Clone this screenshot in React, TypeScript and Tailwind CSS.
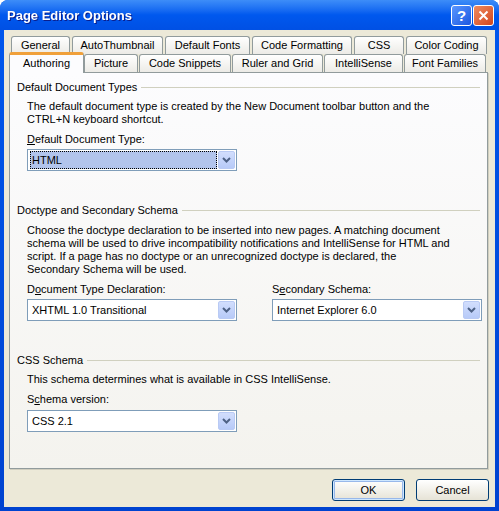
import React from 'react';

const font = { fontFamily: '"Liberation Sans", Arial, sans-serif' };

const backTabs = [
  { label: 'General', w: 'w-[59px]', ml: 'ml-[7px]' },
  { label: 'AutoThumbnail', w: 'w-[91px]', ml: 'ml-[2px]' },
  { label: 'Default Fonts', w: 'w-[85px]', ml: 'ml-[2px]' },
  { label: 'Code Formatting', w: 'w-[100px]', ml: 'ml-[2px]' },
  { label: 'CSS', w: 'w-[50px]', ml: 'ml-[2px]' },
  { label: 'Color Coding', w: 'w-[81px]', ml: 'ml-[2px]' },
];

const frontTabs = [
  { label: 'Picture', w: 'w-[54px]', ml: 'ml-0' },
  { label: 'Code Snippets', w: 'w-[92px]', ml: 'ml-[1px]' },
  { label: 'Ruler and Grid', w: 'w-[91px]', ml: 'ml-[1px]' },
  { label: 'IntelliSense', w: 'w-[79px]', ml: 'ml-[1px]' },
  { label: 'Font Families', w: 'w-[82px]', ml: 'ml-[1px]' },
];

function Tab({ label, w, ml }: { label: string; w: string; ml: string }) {
  return (
    <div
      className={`${w} ${ml} h-[18px] shrink-0 flex items-center justify-center rounded-t-[3px] border border-b-0 border-[#919B9C] bg-gradient-to-b from-[#FFFFFF] to-[#ECEBE6] text-black`}
    >
      {label}
    </div>
  );
}

function Chevron() {
  return (
    <svg width="9" height="6" viewBox="0 0 9 6">
      <polyline points="1,1 4.5,4.5 8,1" fill="none" stroke="#4D6185" strokeWidth="2" />
    </svg>
  );
}

function Select({ value, focused }: { value: string; focused?: boolean }) {
  return (
    <div className="w-[210px] h-[22px] border border-[#7F9DB9] bg-white flex items-center p-[1px]">
      <div className="flex-1 h-full flex items-center pl-[1px]">
        {focused ? (
          <div className="w-[187px] h-[18px] flex items-center pl-[1px] bg-[#B2C4EC] border border-dotted border-black">
            {value}
          </div>
        ) : (
          <div className="pl-[2px]">{value}</div>
        )}
      </div>
      <div className="w-[17px] h-[18px] mr-[0px] rounded-[2px] border border-[#B9CAF4] bg-gradient-to-b from-[#D2DEFD] to-[#B7CAF8] flex items-center justify-center">
        <Chevron />
      </div>
    </div>
  );
}

function Heading({ children, className = '' }: { children: React.ReactNode; className?: string }) {
  return (
    <div className={`flex items-center h-[13px] ${className}`}>
      <span className="shrink-0">{children}</span>
      <div className="flex-1 ml-[4px] h-px bg-[#D0D0BF]" />
    </div>
  );
}

function DialogButton({ label, primary }: { label: string; primary?: boolean }) {
  return (
    <button
      className={`w-[73px] h-[22px] rounded-[3px] border border-[#003C74] bg-gradient-to-b from-[#FFFFFF] to-[#E6E3D6] text-black ${
        primary ? 'shadow-[inset_0_0_0_1px_#CEE7FF,inset_0_0_0_2px_#98B8EA]' : ''
      }`}
    >
      {label}
    </button>
  );
}

export default function App() {
  return (
    <div
      className="w-[499px] h-[511px] flex flex-col rounded-t-[8px] bg-gradient-to-b from-[#0058EE] to-[#0043D0] text-[11px] leading-[13px] text-black"
      style={font}
    >
      {/* title bar */}
      <div className="h-[30px] shrink-0 flex items-center pl-[7px] pr-[5px] rounded-t-[8px] bg-gradient-to-b from-[#3D8DF8] via-[#0058EE] to-[#0050E4]">
        <span className="text-white font-bold text-[13px] leading-[16px] drop-shadow-[1px_1px_0_#0A1E8C] mt-[1px]">
          Page Editor Options
        </span>
        <div className="ml-auto flex gap-[1px] mt-[1px]">
          <div className="w-[21px] h-[21px] rounded-[3px] border border-white bg-gradient-to-br from-[#5A97FF] to-[#1B55E0] flex items-center justify-center text-white font-bold text-[15px]">
            ?
          </div>
          <div className="w-[21px] h-[21px] rounded-[3px] border border-white bg-gradient-to-br from-[#EE8A5E] to-[#D3441A] flex items-center justify-center">
            <svg width="11" height="11" viewBox="0 0 11 11">
              <path d="M1.5 1.5 L9.5 9.5 M9.5 1.5 L1.5 9.5" stroke="white" strokeWidth="2" />
            </svg>
          </div>
        </div>
      </div>

      {/* body */}
      <div className="flex-1 mx-[4px] mb-[4px] bg-[#ECE9D8] flex flex-col pt-[6px]">
        <div className="flex h-[18px]">
          {backTabs.map((t) => (
            <Tab key={t.label} {...t} />
          ))}
        </div>
        <div className="flex h-[18px] items-start">
          <div className="relative z-10 ml-[5px] w-[75px] h-[21px] -mt-[2px] shrink-0 flex items-center justify-center rounded-t-[3px] border border-b-0 border-[#919B9C] border-t-[3px] border-t-[#F0A03A] bg-[#FCFCFE] pb-[1px]">
            Authoring
          </div>
          {frontTabs.map((t) => (
            <Tab key={t.label} {...t} />
          ))}
        </div>

        {/* panel */}
        <div className="ml-[5px] w-[479px] h-[397px] border border-[#919B9C] bg-gradient-to-b from-[#FCFCFE] to-[#F4F3EE] pt-[8px] pl-[7px] pr-[7px] shadow-[1px_1px_0_#D0CEBF]">
          <Heading>Default Document Types</Heading>
          <div className="pl-[10px]">
            <p className="mt-[6px]">
              The default document type is created by the New Document toolbar button and the
              <br />
              CTRL+N keyboard shortcut.
            </p>
            <div className="mt-[7px]">
              <u>D</u>efault Document Type:
            </div>
            <div className="mt-[3px]">
              <Select value="HTML" focused />
            </div>
          </div>

          <Heading className="mt-[33px]">Doctype and Secondary Schema</Heading>
          <div className="pl-[10px]">
            <p className="mt-[7px]">
              Choose the doctype declaration to be inserted into new pages. A matching document
              <br />
              schema will be used to drive incompatibility notifications and IntelliSense for HTML and
              <br />
              script. If a page has no doctype or an unrecognized doctype is declared, the
              <br />
              Secondary Schema will be used.
            </p>
            <div className="mt-[7px] flex gap-[35px]">
              <div className="w-[210px]">
                <div>
                  D<u>o</u>cument Type Declaration:
                </div>
                <div className="mt-[3px]">
                  <Select value="XHTML 1.0 Transitional" />
                </div>
              </div>
              <div className="w-[210px]">
                <div>
                  S<u>e</u>condary Schema:
                </div>
                <div className="mt-[3px]">
                  <Select value="Internet Explorer 6.0" />
                </div>
              </div>
            </div>
          </div>

          <Heading className="mt-[33px]">CSS Schema</Heading>
          <div className="pl-[10px]">
            <p className="mt-[6px]">This schema determines what is available in CSS IntelliSense.</p>
            <div className="mt-[7px]">
              S<u>c</u>hema version:
            </div>
            <div className="mt-[4px]">
              <Select value="CSS 2.1" />
            </div>
          </div>
        </div>

        {/* buttons */}
        <div className="mt-[10px] flex justify-end gap-[11px] pr-[6px]">
          <DialogButton label="OK" primary />
          <DialogButton label="Cancel" />
        </div>
      </div>
    </div>
  );
}
